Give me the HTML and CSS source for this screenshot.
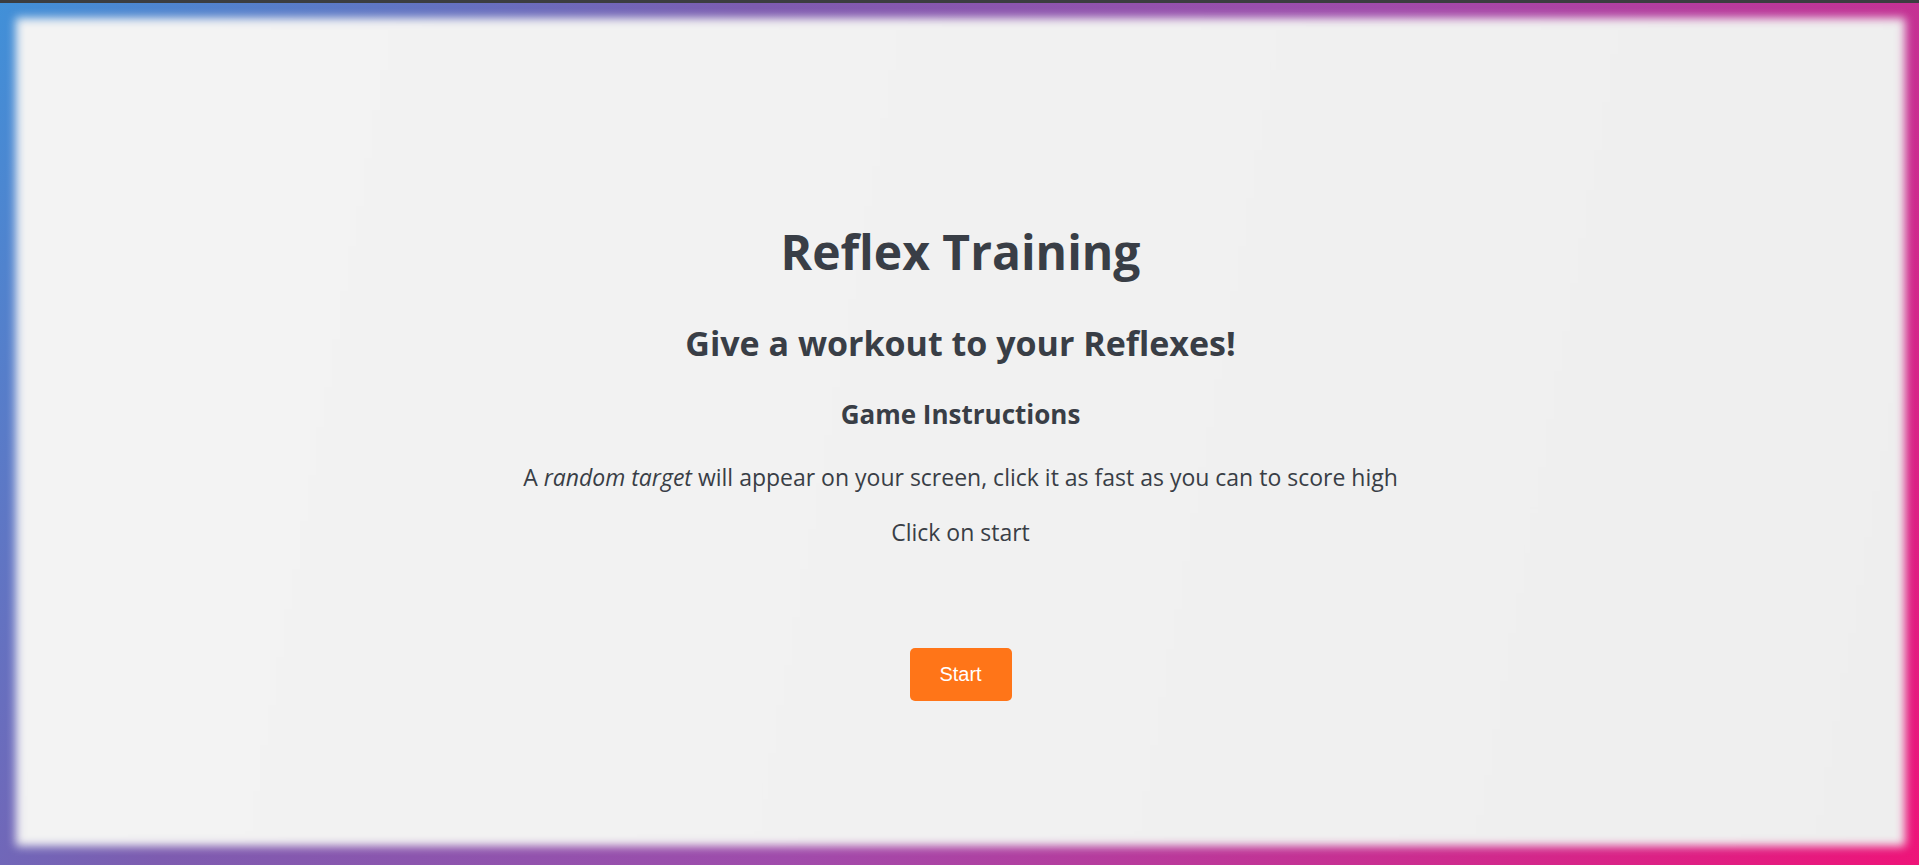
FILE: index.html
```html
<!DOCTYPE html>
<html lang="en">
<head>
<meta charset="utf-8">
<title>Reflex Training</title>
<link rel="stylesheet" href="styles.css">
</head>
<body>
<div class="topbar"></div>
<div class="stage">
  <main class="panel">
    <div class="content">
      <h1 class="title">Reflex Training</h1>
      <h2 class="subtitle">Give a workout to your Reflexes!</h2>
      <h3 class="section">Game Instructions</h3>
      <p class="text">A <em>random target</em> will appear on your screen, click it as fast as you can to score high</p>
      <p class="text text-last">Click on start</p>
      <button class="start" type="button">Start</button>
    </div>
  </main>
</div>
</body>
</html>
```

FILE: styles.css
```css
html, body {
  margin: 0;
  padding: 0;
  height: 100%;
}
body {
  display: flex;
  flex-direction: column;
  font-family: "Open Sans", "Noto Sans", sans-serif;
  color: #393e46;
  overflow: hidden;
}
.topbar {
  height: 3px;
  background: #3b3d40;
  flex: none;
}
.stage {
  flex: 1;
  display: flex;
  padding: 15px 14px 19px 16px;
  background: linear-gradient(125deg, #4190d8 0%, #7d5cb0 30%, #a04bab 55%, #ee1479 100%);
}
.panel {
  flex: 1;
  position: relative;
  display: flex;
  flex-direction: column;
}
.panel::before {
  content: "";
  position: absolute;
  inset: 0;
  background: linear-gradient(100deg, #f3f3f3 0%, #f1f1f1 50%, #eeeeee 100%);
  filter: blur(5px);
}
.content {
  position: relative;
  display: flex;
  flex-direction: column;
  align-items: center;
  padding-top: 204px;
  text-align: center;
}
.title {
  margin: 0;
  font-size: 48px;
  line-height: 60px;
  font-weight: 700;
}
.subtitle {
  margin: 41px 0 0;
  font-size: 34px;
  line-height: 40px;
  font-weight: 700;
}
.section {
  margin: 36px 0 0;
  font-size: 26px;
  line-height: 30px;
  font-weight: 700;
}
.text {
  margin: 33px 0 0;
  font-size: 23px;
  line-height: 30px;
}
.text-last {
  margin-top: 25px;
}
.start {
  margin-top: 101px;
  width: 102px;
  height: 53px;
  border: none;
  border-radius: 5px;
  background: #ff7518;
  color: #ffffff;
  font-family: "Liberation Sans", Arial, sans-serif;
  font-size: 20px;
  padding: 0;
}
```
